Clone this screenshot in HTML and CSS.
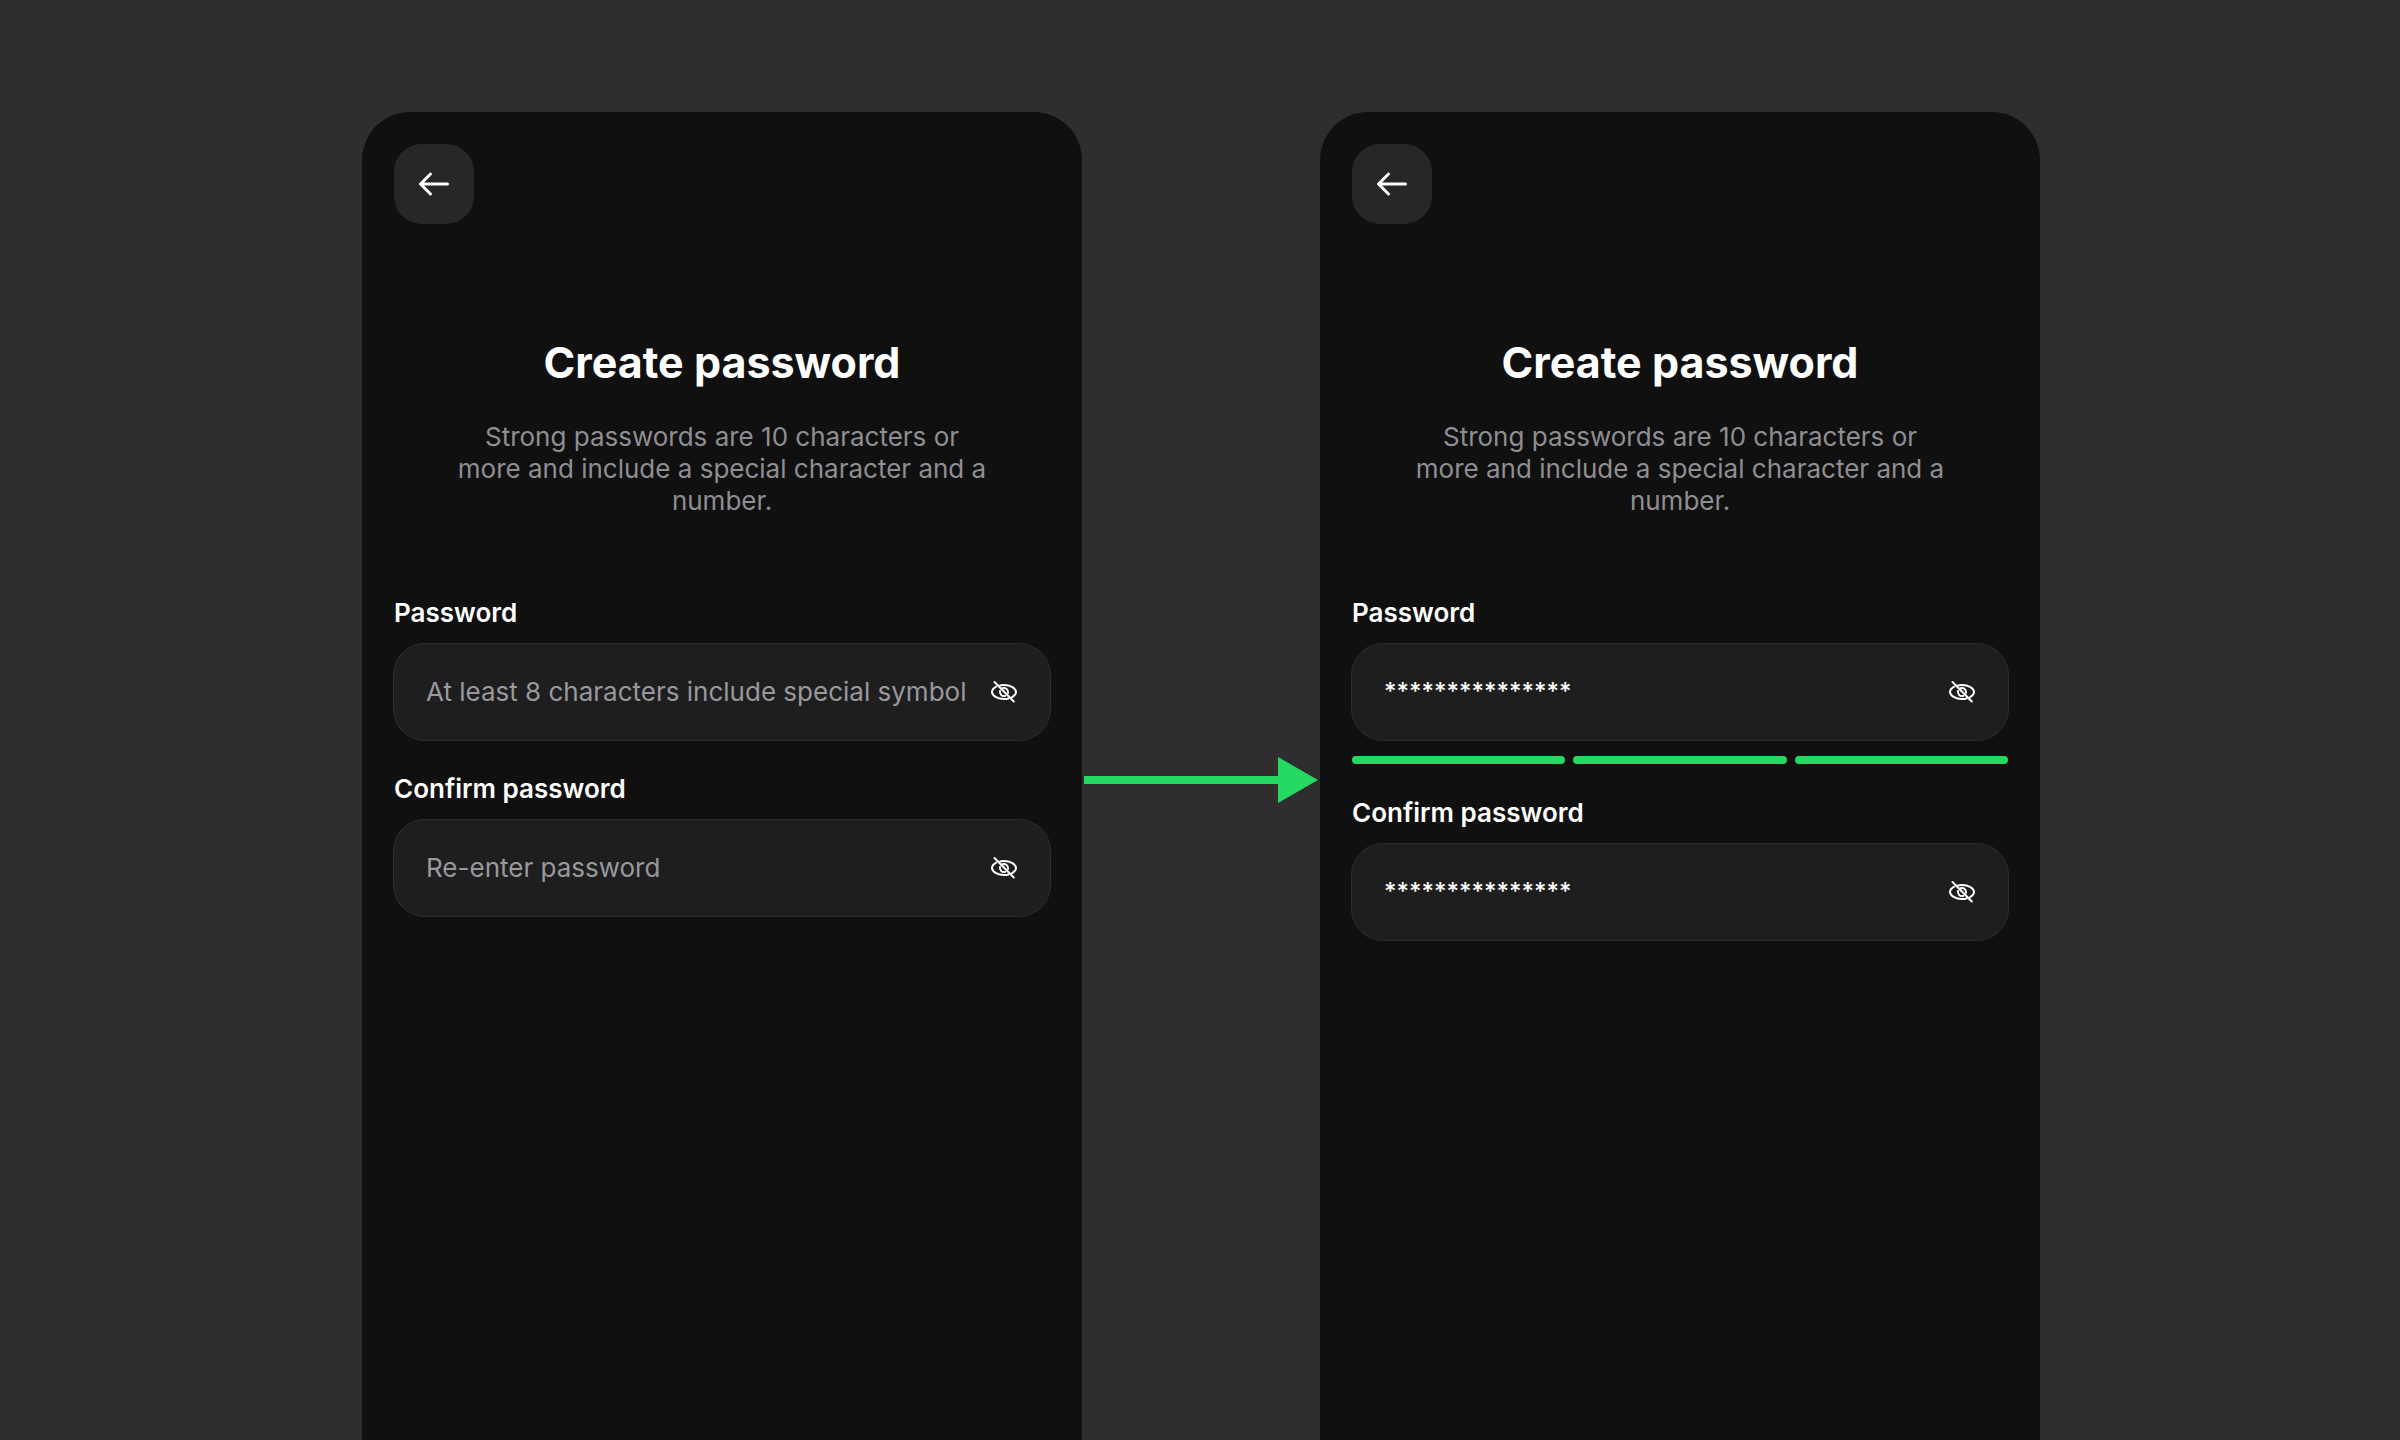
FILE: index.html
```html
<!DOCTYPE html>
<html lang="en">
<head>
    <meta charset="UTF-8">
    <meta name="viewport" content="width=device-width, initial-scale=1.0">
    <title>Create password</title>
    <link rel="stylesheet" href="styles.css">
</head>
<body>
    <svg class="sprite" aria-hidden="true">
        <symbol id="icon-back" viewBox="0 0 32 32">
            <path d="M3 16H29.500M12.500 6L2.500 16L12.500 26" />
        </symbol>
        <symbol id="icon-eye-off" viewBox="0 0 32 32">
            <path d="M11.500 9.600C13 9.100 14.500 8.900 16 8.900C22.500 8.900 28 12.600 28 16C28 17.900 26.300 19.900 23.800 21.300M20.500 22.500C19 22.900 17.500 23.100 16 23.100C9.500 23.100 4 19.400 4 16C4 14.100 5.700 12.100 8.200 10.700" />
            <path d="M14.500 12.300C17.500 11.300 20.500 13.500 20.100 16.800M17.200 19.900C14 20.600 11.500 18.200 12 15" />
            <path d="M6.500 6L25.800 25.500" />
        </symbol>
    </svg>

    <main class="flow">
        <section class="phone">
            <button type="button" class="back-btn" aria-label="Back">
                <svg class="icon"><use href="#icon-back"></use></svg>
            </button>
            <h1>Create password</h1>
            <p class="hint">Strong passwords are 10 characters or more and include a special character and a number.</p>
            <form>
                <div class="form-group">
                    <label for="password">Password</label>
                    <div class="field">
                        <input type="password" id="password" placeholder="At least 8 characters include special symbol">
                        <button type="button" class="eye-btn" aria-label="Show password">
                            <svg class="icon"><use href="#icon-eye-off"></use></svg>
                        </button>
                    </div>
                </div>
                <div class="form-group">
                    <label for="confirm">Confirm password</label>
                    <div class="field">
                        <input type="password" id="confirm" placeholder="Re-enter password">
                        <button type="button" class="eye-btn" aria-label="Show password">
                            <svg class="icon"><use href="#icon-eye-off"></use></svg>
                        </button>
                    </div>
                </div>
            </form>
        </section>

        <div class="arrow">
            <span class="arrow-line"></span>
            <span class="arrow-head"></span>
        </div>

        <section class="phone">
            <button type="button" class="back-btn" aria-label="Back">
                <svg class="icon"><use href="#icon-back"></use></svg>
            </button>
            <h1>Create password</h1>
            <p class="hint">Strong passwords are 10 characters or more and include a special character and a number.</p>
            <form>
                <div class="form-group">
                    <label for="password-filled">Password</label>
                    <div class="field">
                        <input type="text" class="masked" id="password-filled" value="***************" autocomplete="off">
                        <button type="button" class="eye-btn" aria-label="Show password">
                            <svg class="icon"><use href="#icon-eye-off"></use></svg>
                        </button>
                    </div>
                    <div class="strength">
                        <span></span>
                        <span></span>
                        <span></span>
                    </div>
                </div>
                <div class="form-group">
                    <label for="confirm-filled">Confirm password</label>
                    <div class="field">
                        <input type="text" class="masked" id="confirm-filled" value="***************" autocomplete="off">
                        <button type="button" class="eye-btn" aria-label="Show password">
                            <svg class="icon"><use href="#icon-eye-off"></use></svg>
                        </button>
                    </div>
                </div>
            </form>
        </section>
    </main>
</body>
</html>
```
FILE: styles.css
```css
* {
    box-sizing: border-box;
}
body {
    margin: 0;
    font-family: Inter, "Liberation Sans", sans-serif;
    font-size: 26px;
    line-height: 32px;
    background: #2e2e2e;
    color: #ffffff;
}
.sprite {
    display: none;
}
.flow {
    display: grid;
    grid-template-columns: 1fr 238px 1fr;
    min-height: 100vh;
    padding: 112px 360px 0 362px;
}
.phone {
    padding: 32px;
    background: #101010;
    border-radius: 48px 48px 0 0;
}
button {
    padding: 0;
    border: none;
    background: none;
    color: inherit;
    cursor: pointer;
}
.icon {
    display: block;
    width: 32px;
    height: 32px;
    fill: none;
    stroke: currentColor;
    stroke-width: 3;
    stroke-linecap: round;
    stroke-linejoin: round;
}
.back-btn {
    display: flex;
    align-items: center;
    justify-content: center;
    width: 80px;
    height: 80px;
    border-radius: 28px;
    background: #272727;
}
h1 {
    margin: 112px 0 33px;
    font-size: 43px;
    font-weight: 700;
    line-height: 52px;
    text-align: center;
}
.hint {
    max-width: 536px;
    margin: 0 auto 80px;
    color: #8e8e93;
    text-align: center;
}
.form-group {
    margin-bottom: 32px;
}
label {
    display: block;
    margin-bottom: 14px;
    font-weight: 600;
}
.field {
    display: flex;
    align-items: center;
    height: 98px;
    margin: 0 -1px;
    padding: 0 30px 0 32px;
    border: 1px solid #2e2e2e;
    border-radius: 32px;
    background: #1e1e1e;
}
input {
    flex: 1;
    min-width: 0;
    padding: 0;
    border: none;
    outline: none;
    background: none;
    color: #ffffff;
    font: inherit;
}
input::placeholder {
    color: #98989f;
    opacity: 1;
}
.masked {
    font-size: 24px;
    font-weight: 500;
}
.eye-btn .icon {
    stroke-width: 2;
}
.strength {
    display: grid;
    grid-template-columns: repeat(3, 1fr);
    gap: 8px;
    margin-top: 15px;
    margin-bottom: 33px;
}
.strength span {
    height: 8px;
    border-radius: 4px;
    background: #25d962;
}
.arrow {
    display: flex;
    align-items: center;
    align-self: start;
    margin: 645px 2px 0;
}
.arrow-line {
    flex: 1;
    height: 8px;
    background: #25d962;
}
.arrow-head {
    width: 40px;
    height: 46px;
    background: #25d962;
    clip-path: polygon(0 0, 100% 50%, 0 100%);
}
```
